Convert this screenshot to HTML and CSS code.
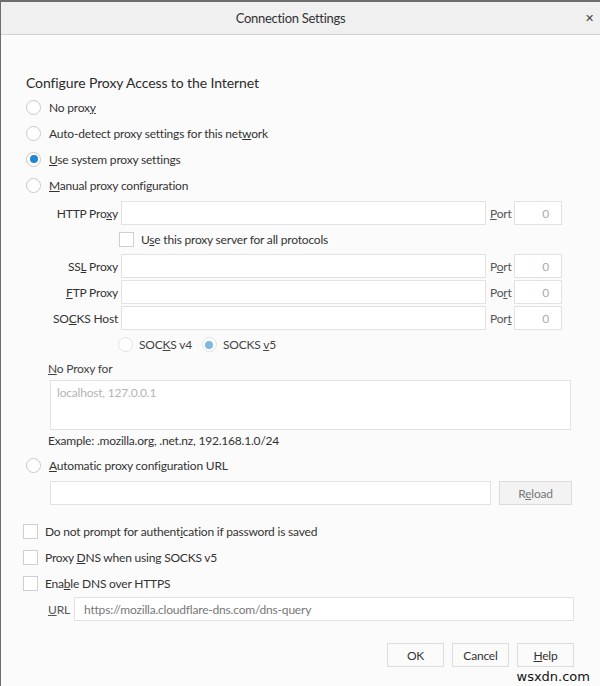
FILE: index.html
```html
<!DOCTYPE html>
<html lang="en">
  <head>
    <meta charset="UTF-8">
    <meta name="viewport" content="width=device-width, initial-scale=1.0">
    <title>Connection Settings</title>
    <link rel="stylesheet" href="styles.css">
  </head>
  <body>
    <div class="window">
      <!-- Title bar -->
      <div class="titlebar">
        <span class="title">Connection Settings</span>
        <span class="close">&#x2715;</span>
      </div>

      <div class="content">
        <h1 class="heading">Configure Proxy Access to the Internet</h1>

        <!-- Proxy mode -->
        <label class="option"><span class="radio"></span><span>No prox<u>y</u></span></label>
        <label class="option"><span class="radio"></span><span>Auto-detect proxy settings for this net<u>w</u>ork</span></label>
        <label class="option"><span class="radio checked"></span><span><u>U</u>se system proxy settings</span></label>
        <label class="option"><span class="radio"></span><span><u>M</u>anual proxy configuration</span></label>

        <!-- Manual proxy fields -->
        <div class="manual">
          <span class="field-label">HTTP Pro<u>x</u>y</span>
          <input class="text-input" type="text">
          <span class="port-label"><u>P</u>ort</span>
          <input class="port-input" type="text" value="0">

          <label class="share-row"><span class="checkbox"></span><span>U<u>s</u>e this proxy server for all protocols</span></label>

          <span class="field-label">SS<u>L</u> Proxy</span>
          <input class="text-input" type="text">
          <span class="port-label">P<u>o</u>rt</span>
          <input class="port-input" type="text" value="0">

          <span class="field-label"><u>F</u>TP Proxy</span>
          <input class="text-input" type="text">
          <span class="port-label">Po<u>r</u>t</span>
          <input class="port-input" type="text" value="0">

          <span class="field-label">SO<u>C</u>KS Host</span>
          <input class="text-input" type="text">
          <span class="port-label">Por<u>t</u></span>
          <input class="port-input" type="text" value="0">

          <div class="socks-row">
            <label class="socks-option"><span class="radio disabled"></span><span>SOC<u>K</u>S v4</span></label>
            <label class="socks-option"><span class="radio checked disabled"></span><span>SOCKS <u>v</u>5</span></label>
          </div>
        </div>

        <div class="no-proxy">
          <div class="no-proxy-label"><u>N</u>o Proxy for</div>
          <textarea class="no-proxy-box" placeholder="localhost, 127.0.0.1"></textarea>
          <div class="example">Example: .mozilla.org, .net.nz, 192.168.1.0/24</div>
        </div>

        <label class="option"><span class="radio"></span><span><u>A</u>utomatic proxy configuration URL</span></label>
        <div class="pac-row">
          <input class="pac-input" type="text">
          <button class="button reload">R<u>e</u>load</button>
        </div>

        <!-- Extra options -->
        <div class="checks">
          <label class="check"><span class="checkbox"></span><span>Do not prompt for authent<u>i</u>cation if password is saved</span></label>
          <label class="check"><span class="checkbox"></span><span>Proxy <u>D</u>NS when using SOCKS v5</span></label>
          <label class="check"><span class="checkbox"></span><span>Ena<u>b</u>le DNS over HTTPS</span></label>
        </div>
        <div class="doh-row">
          <span class="doh-label"><u>U</u>RL</span>
          <input class="doh-input" type="text" value="https://mozilla.cloudflare-dns.com/dns-query">
        </div>

        <div class="actions">
          <button class="button">OK</button>
          <button class="button">Cancel</button>
          <button class="button"><u>H</u>elp</button>
        </div>
      </div>
      <div class="watermark">wsxdn.com</div>
    </div>
  </body>
</html>
```

FILE: styles.css
```css
body {
  margin: 0;
  background: #6e6e6e;
  font-family: Lato, "Open Sans", sans-serif;
  font-size: 12px;
  letter-spacing: -0.2px;
  color: #333;
}

.window {
  position: relative;
  height: 684px;
  margin-top: 2px;
  margin-left: 1px;
  background: #fbfbfb;
}

.titlebar {
  height: 32px;
  display: flex;
  align-items: center;
  justify-content: center;
  padding-right: 20px;
  position: relative;
  background: #f0f0f0;
  border-bottom: 1px solid #d4d4d4;
}

.title {
  font-size: 13px;
  letter-spacing: -0.3px;
  color: #333;
}

.close {
  position: absolute;
  right: 6px;
  top: 9px;
  font-size: 11px;
  color: #444;
}

.content {
  padding: 38px 0 0 0;
}

.heading {
  margin: 0 0 0 25px;
  height: 21px;
  line-height: 20px;
  font-size: 14px;
  letter-spacing: -0.1px;
  font-weight: normal;
  color: #2b2b2b;
}

.option {
  display: flex;
  align-items: center;
  height: 26px;
  padding-left: 25px;
}

.radio {
  width: 13px;
  height: 13px;
  border: 1px solid #c9c9c9;
  border-radius: 50%;
  background: #fff;
  margin-right: 8px;
  display: flex;
  align-items: center;
  justify-content: center;
  box-sizing: content-box;
}

.radio.checked::after {
  content: "";
  width: 8px;
  height: 8px;
  border-radius: 50%;
  background: #1f86d3;
}

.radio.disabled {
  border-color: #e2e2e2;
}

.radio.checked.disabled::after {
  background: #7fb7e1;
}

.checkbox {
  width: 13px;
  height: 13px;
  border: 1px solid #cfcfcf;
  background: #fff;
  margin-right: 7px;
}

.manual {
  display: grid;
  grid-template-columns: 71px 365px 22px 48px;
  column-gap: 3px;
  align-items: center;
  margin-left: 46px;
  margin-top: 2px;
}

.field-label {
  text-align: right;
  white-space: nowrap;
}

.text-input,
.port-input,
.pac-input,
.doh-input,
.no-proxy-box {
  box-sizing: border-box;
  height: 24px;
  margin: 1px 0;
  border: 1px solid #e2e2e2;
  background: #fff;
  font-family: inherit;
  font-size: 12px;
  letter-spacing: -0.2px;
  color: #333;
  padding: 0 6px;
}

.port-label {
  margin-left: 1px;
  color: #555;
}

.port-input {
  text-align: right;
  color: #aaa;
  padding-right: 12px;
}

.share-row {
  grid-column: 2 / 5;
  display: flex;
  align-items: center;
  height: 27px;
  margin-left: -2px;
}

.socks-row {
  grid-column: 2 / 5;
  display: flex;
  align-items: center;
  height: 27px;
  margin-left: -3px;
}

.socks-option {
  display: flex;
  align-items: center;
  margin-right: 10px;
  color: #444;
}

.socks-option .radio {
  margin-right: 6px;
}

.no-proxy {
  padding-left: 47px;
}

.no-proxy-label {
  height: 22px;
  line-height: 22px;
  color: #444;
}

.no-proxy-box {
  display: block;
  width: 521px;
  height: 50px;
  resize: none;
  padding: 4px 6px;
  margin: 0 0 0 2px;
}

.no-proxy-box::placeholder,
.pac-input::placeholder {
  color: #b4b4b4;
}

.example {
  height: 22px;
  line-height: 22px;
}

.pac-row {
  display: flex;
  align-items: center;
  margin: 2px 0 0 49px;
  gap: 8px;
}

.pac-input {
  width: 441px;
}

.button {
  box-sizing: border-box;
  height: 24px;
  border: 1px solid #dcdcdc;
  background: #fbfbfb;
  font-family: inherit;
  font-size: 12px;
  letter-spacing: -0.2px;
  color: #333;
  padding: 0;
}

.reload {
  width: 73px;
  color: #777;
  background: #f3f3f3;
}

.checks {
  margin-top: 12px;
}

.check {
  display: flex;
  align-items: center;
  height: 26px;
  padding-left: 22px;
}

.doh-row {
  display: flex;
  align-items: center;
  margin: 0 0 0 47px;
}

.doh-label {
  width: 26px;
  color: #555;
}

.doh-input {
  width: 500px;
  color: #777;
  padding-left: 9px;
}

.actions {
  display: flex;
  justify-content: flex-end;
  gap: 8px;
  margin: 21px 26px 0 0;
}

.actions .button {
  width: 57px;
}

.watermark {
  position: absolute;
  right: 10px;
  bottom: 2px;
  font-family: "DejaVu Sans", sans-serif;
  font-size: 13px;
  letter-spacing: 0;
  color: #111;
  background: #fbfbfb;
}
```
